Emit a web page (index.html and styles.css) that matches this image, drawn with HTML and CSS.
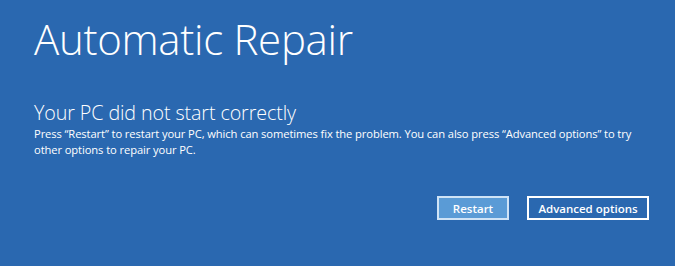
FILE: index.html
```html
<!DOCTYPE html>
<html lang="en">
<head>
<meta charset="utf-8">
<title>Automatic Repair</title>
<link rel="stylesheet" href="styles.css">
</head>
<body>
<main class="screen">
  <h1 class="title">Automatic Repair</h1>
  <h2 class="subtitle">Your PC did not start correctly</h2>
  <p class="message">Press “Restart” to restart your PC, which can sometimes fix the problem. You can also press “Advanced options” to try other options to repair your PC.</p>
  <div class="actions">
    <button class="btn btn-primary">Restart</button>
    <button class="btn btn-outline">Advanced options</button>
  </div>
</main>
</body>
</html>
```

FILE: styles.css
```css
html, body {
  margin: 0;
  padding: 0;
  width: 675px;
  height: 266px;
  overflow: hidden;
  background: #2a68b0;
}
.screen {
  box-sizing: border-box;
  width: 675px;
  height: 266px;
  padding: 11px 26px 0 34px;
  color: #ffffff;
  font-family: "Open Sans", "Noto Sans", sans-serif;
  display: flex;
  flex-direction: column;
}
.title {
  margin: 0;
  font-weight: 300;
  font-size: 42px;
  line-height: 56px;
  letter-spacing: -0.3px;
}
.subtitle {
  margin: 33px 0 0 0;
  font-weight: 300;
  font-size: 19.7px;
  line-height: 26px;
  letter-spacing: -0.1px;
}
.message {
  margin: 0;
  font-size: 11.2px;
  line-height: 16px;
  letter-spacing: -0.1px;
  max-width: 610px;
}
.actions {
  display: flex;
  justify-content: flex-end;
  gap: 18px;
  margin-top: 38px;
}
.btn {
  box-sizing: border-box;
  height: 24px;
  border: 2px solid #ffffff;
  color: #ffffff;
  font-family: "Open Sans", "Noto Sans", sans-serif;
  font-weight: 600;
  font-size: 11.5px;
  padding: 0;
}
.btn-primary {
  width: 72px;
  background: #5a9bd6;
  border-color: #cfe3f6;
}
.btn-outline {
  width: 122px;
  background: transparent;
}
```
